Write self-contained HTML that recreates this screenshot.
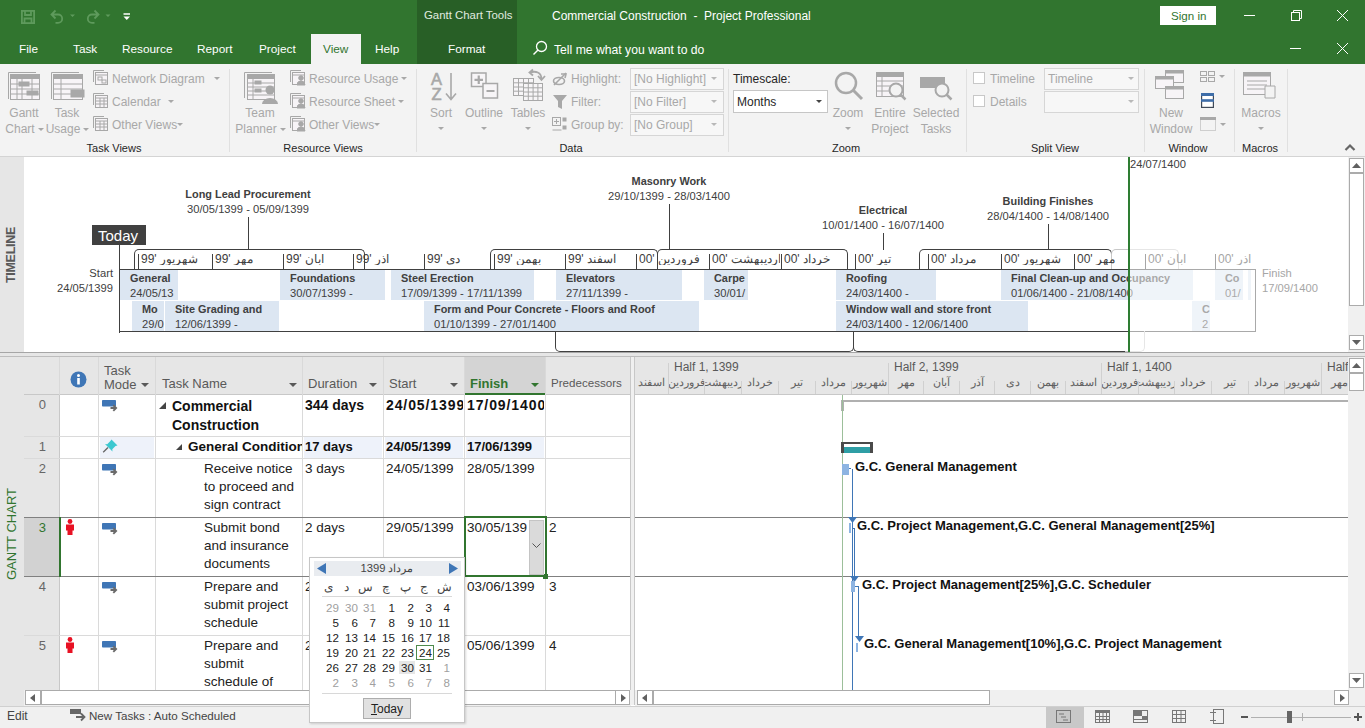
<!DOCTYPE html>
<html><head><meta charset="utf-8">
<style>
*{margin:0;padding:0;box-sizing:border-box}
html,body{width:1365px;height:728px;overflow:hidden;background:#fff;font-family:"Liberation Sans",sans-serif;color:#222}
.a{position:absolute;white-space:nowrap;line-height:1}
svg.a{overflow:visible}
</style></head><body>

<div class="a" style="left:0px;top:0px;width:1365px;height:64px;background:#31752F;"></div>
<div class="a" style="left:417px;top:0px;width:100px;height:64px;background:#285F26;"></div>
<svg class="a" style="left:0px;top:0px;" width="140" height="32" viewBox="0 0 140 32"><g fill="none" stroke="#5E9A5C" stroke-width="1.8">
  <rect x="21.9" y="10.9" width="12.2" height="12.2"/>
  <path d="M25 11v4h6v-4M24.5 23v-4.5h7V23"/>
  <path d="M51.5 14.5h6.5a4.2 4.2 0 0 1 0 8.4h-2.5M55.5 10.5l-4 4 4 4"/>
  <path d="M98.5 14.5h-6.5a4.2 4.2 0 0 0 0 8.4h2.5M94.5 10.5l4 4-4 4"/>
 </g>
 <path d="M70 14.5h5l-2.5 2.5z M105.5 14.5h5l-2.5 2.5z" fill="#5E9A5C"/></svg>
<svg class="a" style="left:123px;top:13px;" width="8" height="8" viewBox="0 0 8 8"><path d="M0.5 1h6.5" stroke="#fff" stroke-width="1.5"/><path d="M0.5 3.5h6.5l-3.25 3.5z" fill="#fff"/></svg>
<div class="a" style="left:424px;top:10px;font-size:11.4px;color:#E0ECE0;">Gantt Chart Tools</div>
<div class="a" style="left:552px;top:10px;font-size:12px;color:#fff;">Commercial Construction &nbsp;-&nbsp; Project Professional</div>
<div class="a" style="left:1160px;top:6px;width:56px;height:19px;background:#fff;"></div>
<div class="a" style="left:1171px;top:10px;font-size:11.6px;color:#31752F;">Sign in</div>
<svg class="a" style="left:1235px;top:6px;" width="125" height="58" viewBox="0 0 125 58"><g stroke="#fff" stroke-width="1" fill="none">
  <path d="M9 9.5h11"/>
  <rect x="56.5" y="6.5" width="8" height="8"/><path d="M58.5 6.5v-2h8v8h-2"/>
  <path d="M102 4l11 11M113 4l-11 11"/>
  <path d="M55 42.5h11"/>
  <path d="M102 37l11 11M113 37l-11 11"/>
 </g></svg>
<div class="a" style="left:311px;top:34px;width:50px;height:30px;background:#F3F3F3;"></div>
<div class="a" style="left:19px;top:44px;font-size:11.8px;color:#fff;">File</div>
<div class="a" style="left:73px;top:44px;font-size:11.8px;color:#fff;">Task</div>
<div class="a" style="left:122px;top:44px;font-size:11.8px;color:#fff;">Resource</div>
<div class="a" style="left:197px;top:44px;font-size:11.8px;color:#fff;">Report</div>
<div class="a" style="left:259px;top:44px;font-size:11.8px;color:#fff;">Project</div>
<div class="a" style="left:375px;top:44px;font-size:11.8px;color:#fff;">Help</div>
<div class="a" style="left:448px;top:44px;font-size:11.8px;color:#fff;">Format</div>
<div class="a" style="left:323px;top:44px;font-size:11.8px;color:#31752F;">View</div>
<svg class="a" style="left:532px;top:40px;" width="16" height="16" viewBox="0 0 16 16"><circle cx="9.5" cy="6.5" r="5" fill="none" stroke="#fff" stroke-width="1.3"/><path d="M6 10L1.5 14.5" stroke="#fff" stroke-width="1.5"/></svg>
<div class="a" style="left:554px;top:44px;font-size:12.2px;color:#fff;">Tell me what you want to do</div>
<div class="a" style="left:0px;top:64px;width:1365px;height:93px;background:#F3F3F3;border-bottom:1px solid #D4D4D4"></div>
<div class="a" style="left:229px;top:69px;width:1px;height:83px;background:#E0E0E0;"></div>
<div class="a" style="left:416px;top:69px;width:1px;height:83px;background:#E0E0E0;"></div>
<div class="a" style="left:728px;top:69px;width:1px;height:83px;background:#E0E0E0;"></div>
<div class="a" style="left:966px;top:69px;width:1px;height:83px;background:#E0E0E0;"></div>
<div class="a" style="left:1144px;top:69px;width:1px;height:83px;background:#E0E0E0;"></div>
<div class="a" style="left:1234px;top:69px;width:1px;height:83px;background:#E0E0E0;"></div>
<div class="a" style="left:1287px;top:69px;width:1px;height:83px;background:#E0E0E0;"></div>
<div class="a" style="left:14px;width:200px;text-align:center;top:143px;font-size:11px;color:#262626;">Task Views</div>
<div class="a" style="left:223px;width:200px;text-align:center;top:143px;font-size:11px;color:#262626;">Resource Views</div>
<div class="a" style="left:471px;width:200px;text-align:center;top:143px;font-size:11px;color:#262626;">Data</div>
<div class="a" style="left:746px;width:200px;text-align:center;top:143px;font-size:11px;color:#262626;">Zoom</div>
<div class="a" style="left:955px;width:200px;text-align:center;top:143px;font-size:11px;color:#262626;">Split View</div>
<div class="a" style="left:1088px;width:200px;text-align:center;top:143px;font-size:11px;color:#262626;">Window</div>
<div class="a" style="left:1160px;width:200px;text-align:center;top:143px;font-size:11px;color:#262626;">Macros</div>
<svg class="a" style="left:8px;top:72px;" width="34" height="30" viewBox="0 0 34 30"><g stroke="#A8A8A8" fill="none" stroke-width="1"><path d="M0.5 27V0.5H28"/><rect x="2.5" y="2.5" width="29" height="25" fill="#F7F4F7"/><rect x="2.5" y="2.5" width="29" height="4" fill="#A8A8A8"/><path d="M2.5 12h29M2.5 17h29M2.5 22h29M9 6v21M14 6v21M24 6v21"/><rect x="11" y="10" width="10" height="4" fill="#A8A8A8"/><rect x="19" y="19" width="11" height="4" fill="#A8A8A8"/></g></svg>
<svg class="a" style="left:51px;top:72px;" width="34" height="30" viewBox="0 0 34 30"><g stroke="#A8A8A8" fill="none" stroke-width="1"><path d="M0.5 27V0.5H28"/><rect x="2.5" y="2.5" width="29" height="25" fill="#F7F4F7"/><rect x="2.5" y="2.5" width="29" height="4" fill="#A8A8A8"/><path d="M2.5 12h29M2.5 17h29M2.5 22h29M10 6v21"/><rect x="20" y="18" width="13" height="7" fill="#A8A8A8"/></g></svg>
<div class="a" style="left:-76px;width:200px;text-align:center;top:107px;font-size:12px;color:#A8A8A8;">Gantt</div>
<div class="a" style="left:-80px;width:200px;text-align:center;top:123px;font-size:12px;color:#A8A8A8;">Chart</div>
<svg class="a" style="left:38px;top:128px;" width="7" height="4" viewBox="0 0 7 4"><path d="M0 0h6l-3 3z" fill="#A8A8A8"/></svg>
<div class="a" style="left:-33px;width:200px;text-align:center;top:107px;font-size:12px;color:#A8A8A8;">Task</div>
<div class="a" style="left:-37px;width:200px;text-align:center;top:123px;font-size:12px;color:#A8A8A8;">Usage</div>
<svg class="a" style="left:83px;top:128px;" width="7" height="4" viewBox="0 0 7 4"><path d="M0 0h6l-3 3z" fill="#A8A8A8"/></svg>
<svg class="a" style="left:93px;top:70px;" width="16" height="16" viewBox="0 0 16 16"><g stroke="#A8A8A8" fill="none"><path d="M0.5 12V0.5H11"/><rect x="2.5" y="2.5" width="12" height="12" fill="#F7F4F7"/><path d="M2.5 5h12"/><rect x="5" y="7" width="4" height="3"/><rect x="9" y="10" width="4" height="3"/></g></svg>
<div class="a" style="left:112px;top:73px;font-size:12px;color:#A8A8A8;">Network Diagram</div>
<svg class="a" style="left:214px;top:77px;" width="7" height="4" viewBox="0 0 7 4"><path d="M0 0h6l-3 3z" fill="#A8A8A8"/></svg>
<svg class="a" style="left:93px;top:93px;" width="16" height="16" viewBox="0 0 16 16"><g stroke="#A8A8A8" fill="none"><path d="M0.5 12V0.5H11"/><rect x="2.5" y="2.5" width="12" height="12" fill="#F7F4F7"/><path d="M2.5 5h12"/><path d="M2.5 8h12M2.5 11h12M7 5v10M11 5v10"/></g></svg>
<div class="a" style="left:112px;top:96px;font-size:12px;color:#A8A8A8;">Calendar</div>
<svg class="a" style="left:168px;top:100px;" width="7" height="4" viewBox="0 0 7 4"><path d="M0 0h6l-3 3z" fill="#A8A8A8"/></svg>
<svg class="a" style="left:93px;top:116px;" width="16" height="16" viewBox="0 0 16 16"><g stroke="#A8A8A8" fill="none"><path d="M0.5 12V0.5H11"/><rect x="2.5" y="2.5" width="12" height="12" fill="#F7F4F7"/><path d="M2.5 5h12"/><path d="M2.5 8h12M2.5 11h12M7 5v10M11 5v10"/></g></svg>
<div class="a" style="left:112px;top:119px;font-size:12px;color:#A8A8A8;">Other Views</div>
<svg class="a" style="left:177px;top:123px;" width="7" height="4" viewBox="0 0 7 4"><path d="M0 0h6l-3 3z" fill="#A8A8A8"/></svg>
<svg class="a" style="left:244px;top:72px;" width="34" height="32" viewBox="0 0 34 32"><g stroke="#A8A8A8" fill="none"><path d="M0.5 26V0.5H28"/><rect x="3.5" y="2.5" width="27" height="25" fill="#F7F4F7"/><rect x="3.5" y="2.5" width="27" height="4" fill="#A8A8A8"/>
<path d="M3.5 11h27M3.5 15h27M3.5 19h27M3.5 23h27M9 6v21"/>
<rect x="11" y="9" width="6" height="3" fill="#A8A8A8"/><rect x="11" y="17" width="6" height="3" fill="#A8A8A8"/></g>
<circle cx="26" cy="18" r="4.5" fill="#A8A8A8"/><path d="M18 32a8 6 0 0 1 16 0z" fill="#A8A8A8"/></svg>
<div class="a" style="left:160px;width:200px;text-align:center;top:107px;font-size:12px;color:#A8A8A8;">Team</div>
<div class="a" style="left:156px;width:200px;text-align:center;top:123px;font-size:12px;color:#A8A8A8;">Planner</div>
<svg class="a" style="left:280px;top:128px;" width="7" height="4" viewBox="0 0 7 4"><path d="M0 0h6l-3 3z" fill="#A8A8A8"/></svg>
<svg class="a" style="left:290px;top:70px;" width="16" height="16" viewBox="0 0 16 16"><g stroke="#A8A8A8" fill="none"><path d="M0.5 12V0.5H11"/><rect x="2.5" y="2.5" width="12" height="12" fill="#F7F4F7"/><path d="M2.5 5h12"/><circle cx="11" cy="8" r="2.3" fill="#A8A8A8"/><path d="M7 15a4 4 0 0 1 8 0z" fill="#A8A8A8"/></g></svg>
<div class="a" style="left:309px;top:73px;font-size:12px;color:#A8A8A8;">Resource Usage</div>
<svg class="a" style="left:401px;top:77px;" width="7" height="4" viewBox="0 0 7 4"><path d="M0 0h6l-3 3z" fill="#A8A8A8"/></svg>
<svg class="a" style="left:290px;top:93px;" width="16" height="16" viewBox="0 0 16 16"><g stroke="#A8A8A8" fill="none"><path d="M0.5 12V0.5H11"/><rect x="2.5" y="2.5" width="12" height="12" fill="#F7F4F7"/><path d="M2.5 5h12"/><circle cx="11" cy="8" r="2.3" fill="#A8A8A8"/><path d="M7 15a4 4 0 0 1 8 0z" fill="#A8A8A8"/></g></svg>
<div class="a" style="left:309px;top:96px;font-size:12px;color:#A8A8A8;">Resource Sheet</div>
<svg class="a" style="left:398px;top:100px;" width="7" height="4" viewBox="0 0 7 4"><path d="M0 0h6l-3 3z" fill="#A8A8A8"/></svg>
<svg class="a" style="left:290px;top:116px;" width="16" height="16" viewBox="0 0 16 16"><g stroke="#A8A8A8" fill="none"><path d="M0.5 12V0.5H11"/><rect x="2.5" y="2.5" width="12" height="12" fill="#F7F4F7"/><path d="M2.5 5h12"/><circle cx="11" cy="8" r="2.3" fill="#A8A8A8"/><path d="M7 15a4 4 0 0 1 8 0z" fill="#A8A8A8"/></g></svg>
<div class="a" style="left:309px;top:119px;font-size:12px;color:#A8A8A8;">Other Views</div>
<svg class="a" style="left:374px;top:123px;" width="7" height="4" viewBox="0 0 7 4"><path d="M0 0h6l-3 3z" fill="#A8A8A8"/></svg>
<svg class="a" style="left:430px;top:70px;" width="30" height="32" viewBox="0 0 30 32"><text x="1" y="14.5" font-size="16.5" font-family="Liberation Sans" fill="#A8A8A8" stroke="#A8A8A8" stroke-width="0.6">A</text><text x="1.5" y="29.7" font-size="16.5" font-family="Liberation Sans" fill="#A8A8A8" stroke="#A8A8A8" stroke-width="0.6">Z</text>
<path d="M21 3v26M16 23.5l5 6 5-6" stroke="#A8A8A8" fill="none" stroke-width="1.6"/></svg>
<div class="a" style="left:341px;width:200px;text-align:center;top:107px;font-size:12px;color:#A8A8A8;">Sort</div>
<svg class="a" style="left:438px;top:127px;" width="7" height="4" viewBox="0 0 7 4"><path d="M0 0h6l-3 3z" fill="#A8A8A8"/></svg>
<svg class="a" style="left:470px;top:70px;" width="32" height="32" viewBox="0 0 32 32"><g stroke="#A8A8A8" fill="#F7F5F7" stroke-width="1.5"><rect x="1.5" y="3" width="14.5" height="13.5"/><rect x="13" y="13.5" width="14.5" height="14.5"/></g><path d="M4.5 9.8h8.5M8.75 5.5v8.5M16.5 21h8" stroke="#A8A8A8" stroke-width="2.2"/></svg>
<div class="a" style="left:384px;width:200px;text-align:center;top:107px;font-size:12px;color:#A8A8A8;">Outline</div>
<svg class="a" style="left:481px;top:127px;" width="7" height="4" viewBox="0 0 7 4"><path d="M0 0h6l-3 3z" fill="#A8A8A8"/></svg>
<svg class="a" style="left:512px;top:68px;" width="34" height="36" viewBox="0 0 34 36"><g stroke="#A8A8A8" fill="#F7F5F7"><rect x="1.5" y="10.5" width="20" height="17"/><path d="M1.5 14.8h20M1.5 19h20M1.5 23.2h20M6.5 10.5v17M11.5 10.5v17M16.5 10.5v17"/>
<rect x="11.5" y="15.5" width="19" height="17"/><path d="M11.5 19.8h19M11.5 24h19M11.5 28.2h19M16.3 15.5v17M21.1 15.5v17M25.9 15.5v17"/></g>
<path d="M18 4.5c6-2 11 0 11.5 6M26 8l3.5 4 3.5-4M21 1.5l-3.5 3 3.5 3" stroke="#A8A8A8" stroke-width="1.8" fill="none"/></svg>
<div class="a" style="left:428px;width:200px;text-align:center;top:107px;font-size:12px;color:#A8A8A8;">Tables</div>
<svg class="a" style="left:525px;top:127px;" width="7" height="4" viewBox="0 0 7 4"><path d="M0 0h6l-3 3z" fill="#A8A8A8"/></svg>
<svg class="a" style="left:552px;top:71px;" width="16" height="16" viewBox="0 0 16 16"><g stroke="#A8A8A8" fill="none" stroke-width="1.6"><ellipse cx="7" cy="10" rx="5.5" ry="3.5"/><path d="M2 14L14 2"/><path d="M9 3l5 0-1 4"/></g></svg>
<div class="a" style="left:571px;top:73px;font-size:12px;color:#A8A8A8;">Highlight:</div>
<svg class="a" style="left:552px;top:94px;" width="16" height="16" viewBox="0 0 16 16"><path d="M1 1h14l-5 6v8l-4-2V7z" fill="#A8A8A8"/></svg>
<div class="a" style="left:571px;top:96px;font-size:12px;color:#A8A8A8;">Filter:</div>
<svg class="a" style="left:552px;top:117px;" width="18" height="16" viewBox="0 0 18 16"><g stroke="#A8A8A8" fill="none"><rect x="0.5" y="0.5" width="8" height="8"/><path d="M2 4.5h5M4.5 2v5M0.5 13h9"/><rect x="11" y="1" width="3" height="3" fill="#A8A8A8"/><rect x="11" y="9" width="3" height="3" fill="#A8A8A8"/></g></svg>
<div class="a" style="left:571px;top:119px;font-size:12px;color:#A8A8A8;">Group by:</div>
<div class="a" style="left:630px;top:68px;width:94px;height:22px;background:#F7F7F7;border:1px solid #D6D6D6"></div>
<div class="a" style="left:634px;top:73px;font-size:12px;color:#A8A8A8;">[No Highlight]</div>
<svg class="a" style="left:711px;top:77px;" width="7" height="4" viewBox="0 0 7 4"><path d="M0 0h6l-3 3z" fill="#B8B8B8"/></svg>
<div class="a" style="left:630px;top:91px;width:94px;height:22px;background:#F7F7F7;border:1px solid #D6D6D6"></div>
<div class="a" style="left:634px;top:96px;font-size:12px;color:#A8A8A8;">[No Filter]</div>
<svg class="a" style="left:711px;top:100px;" width="7" height="4" viewBox="0 0 7 4"><path d="M0 0h6l-3 3z" fill="#B8B8B8"/></svg>
<div class="a" style="left:630px;top:114px;width:94px;height:22px;background:#F7F7F7;border:1px solid #D6D6D6"></div>
<div class="a" style="left:634px;top:119px;font-size:12px;color:#A8A8A8;">[No Group]</div>
<svg class="a" style="left:711px;top:123px;" width="7" height="4" viewBox="0 0 7 4"><path d="M0 0h6l-3 3z" fill="#B8B8B8"/></svg>
<div class="a" style="left:733px;top:73px;font-size:12px;color:#262626;">Timescale:</div>
<div class="a" style="left:733px;top:90px;width:95px;height:23px;background:#fff;border:1px solid #C6C6C6"></div>
<div class="a" style="left:737px;top:96px;font-size:12px;color:#262626;">Months</div>
<svg class="a" style="left:816px;top:100px;" width="7" height="4" viewBox="0 0 7 4"><path d="M0 0h6l-3 3z" fill="#444"/></svg>
<svg class="a" style="left:834px;top:72px;" width="30" height="30" viewBox="0 0 30 30"><circle cx="12" cy="11" r="10" fill="none" stroke="#A8A8A8" stroke-width="2.5"/><path d="M19 18l9 9" stroke="#A8A8A8" stroke-width="3"/></svg>
<div class="a" style="left:748px;width:200px;text-align:center;top:107px;font-size:12px;color:#A8A8A8;">Zoom</div>
<svg class="a" style="left:845px;top:127px;" width="7" height="4" viewBox="0 0 7 4"><path d="M0 0h6l-3 3z" fill="#A8A8A8"/></svg>
<svg class="a" style="left:876px;top:72px;" width="32" height="30" viewBox="0 0 32 30"><g stroke="#A8A8A8" fill="none"><rect x="0.5" y="0.5" width="27" height="24" fill="#F7F4F7"/><rect x="0.5" y="0.5" width="27" height="4" fill="#A8A8A8"/><path d="M0.5 9h27M0.5 14h27M0.5 19h27M6 4v21"/></g>
<circle cx="20" cy="18" r="6.5" fill="#F3F3F3" stroke="#A8A8A8" stroke-width="2"/><path d="M24.5 22.5l5 5" stroke="#A8A8A8" stroke-width="2.5"/></svg>
<div class="a" style="left:790px;width:200px;text-align:center;top:107px;font-size:12px;color:#A8A8A8;">Entire</div>
<div class="a" style="left:790px;width:200px;text-align:center;top:123px;font-size:12px;color:#A8A8A8;">Project</div>
<svg class="a" style="left:920px;top:74px;" width="34" height="30" viewBox="0 0 34 30"><rect x="0" y="3" width="25" height="11" fill="#A8A8A8"/>
<circle cx="22" cy="16" r="6.5" fill="#F3F3F3" stroke="#A8A8A8" stroke-width="2"/><path d="M26.5 20.5l5 5" stroke="#A8A8A8" stroke-width="2.5"/></svg>
<div class="a" style="left:836px;width:200px;text-align:center;top:107px;font-size:12px;color:#A8A8A8;">Selected</div>
<div class="a" style="left:836px;width:200px;text-align:center;top:123px;font-size:12px;color:#A8A8A8;">Tasks</div>
<div class="a" style="left:973px;top:72px;width:12px;height:12px;background:#fff;border:1px solid #C8C8C8"></div>
<div class="a" style="left:973px;top:95px;width:12px;height:12px;background:#fff;border:1px solid #C8C8C8"></div>
<div class="a" style="left:990px;top:73px;font-size:12px;color:#A8A8A8;">Timeline</div>
<div class="a" style="left:990px;top:96px;font-size:12px;color:#A8A8A8;">Details</div>
<div class="a" style="left:1044px;top:68px;width:95px;height:22px;background:#F7F7F7;border:1px solid #D6D6D6"></div>
<div class="a" style="left:1048px;top:73px;font-size:12px;color:#A8A8A8;">Timeline</div>
<svg class="a" style="left:1128px;top:77px;" width="7" height="4" viewBox="0 0 7 4"><path d="M0 0h6l-3 3z" fill="#B8B8B8"/></svg>
<div class="a" style="left:1044px;top:91px;width:95px;height:22px;background:#F7F7F7;border:1px solid #D6D6D6"></div>
<svg class="a" style="left:1128px;top:100px;" width="7" height="4" viewBox="0 0 7 4"><path d="M0 0h6l-3 3z" fill="#B8B8B8"/></svg>
<svg class="a" style="left:1155px;top:70px;" width="32" height="32" viewBox="0 0 32 32"><g stroke="#A8A8A8" fill="#F7F4F7"><rect x="10.5" y="0.5" width="18" height="12"/><rect x="0.5" y="6.5" width="18" height="12"/><rect x="10.5" y="16.5" width="18" height="12"/></g>
<rect x="10.5" y="0.5" width="18" height="3" fill="#A8A8A8"/><rect x="0.5" y="6.5" width="18" height="3" fill="#A8A8A8"/><rect x="10.5" y="16.5" width="18" height="3" fill="#A8A8A8"/></svg>
<div class="a" style="left:1071px;width:200px;text-align:center;top:107px;font-size:12px;color:#A8A8A8;">New</div>
<div class="a" style="left:1071px;width:200px;text-align:center;top:123px;font-size:12px;color:#A8A8A8;">Window</div>
<svg class="a" style="left:1200px;top:71px;" width="30" height="12" viewBox="0 0 30 12"><g stroke="#A8A8A8" fill="none"><rect x="0.5" y="0.5" width="6" height="4"/><rect x="0.5" y="6.5" width="6" height="4"/><rect x="8.5" y="0.5" width="6" height="4"/><rect x="8.5" y="6.5" width="6" height="4"/></g><path d="M19 4h6l-3 3z" fill="#A8A8A8"/></svg>
<svg class="a" style="left:1201px;top:93px;" width="13" height="15" viewBox="0 0 13 15"><rect x="0.6" y="0.6" width="11.8" height="13.8" fill="#fff" stroke="#404A58" stroke-width="1.2"/><rect x="0" y="0" width="13" height="3" fill="#3E6DA8"/><rect x="0" y="6.2" width="13" height="2.6" fill="#3E6DA8"/></svg>
<svg class="a" style="left:1200px;top:117px;" width="30" height="15" viewBox="0 0 30 15"><rect x="0.5" y="0.5" width="15" height="13" fill="none" stroke="#A8A8A8" stroke-dasharray="1 1"/><rect x="0" y="0" width="16" height="3" fill="#A8A8A8"/><path d="M20 6h6l-3 3z" fill="#A8A8A8"/></svg>
<svg class="a" style="left:1243px;top:72px;" width="36" height="30" viewBox="0 0 36 30"><g stroke="#A8A8A8" fill="#F7F4F7"><rect x="0.5" y="0.5" width="27" height="22"/></g><rect x="0.5" y="0.5" width="27" height="4" fill="#A8A8A8"/>
<path d="M4 9h20M4 13h20M4 17h20" stroke="#A8A8A8"/><path d="M22 14h10v12h-10z" fill="#F3F3F3" stroke="#A8A8A8"/></svg>
<div class="a" style="left:1161px;width:200px;text-align:center;top:107px;font-size:12px;color:#A8A8A8;">Macros</div>
<svg class="a" style="left:1258px;top:127px;" width="7" height="4" viewBox="0 0 7 4"><path d="M0 0h6l-3 3z" fill="#A8A8A8"/></svg>
<svg class="a" style="left:1344px;top:143px;" width="12" height="8" viewBox="0 0 12 8"><path d="M1.5 7l4.5-4.5 4.5 4.5" stroke="#666" fill="none" stroke-width="2.2"/></svg>
<!--TIMELINE-->
<div class="a" style="left:0px;top:157px;width:24px;height:195px;background:#E6E6E6;"></div>
<div class="a" style="left:5px;top:283px;transform:rotate(-90deg);transform-origin:0 0;font-size:12.5px;font-weight:bold;color:#595959;letter-spacing:-0.3px">TIMELINE</div>
<div class="a" style="left:148px;width:200px;text-align:center;top:189px;font-size:10.9px;color:#404040;font-weight:bold;">Long Lead Procurement</div>
<div class="a" style="left:148px;width:200px;text-align:center;top:204px;font-size:11.2px;color:#404040;">30/05/1399 - 05/09/1399</div>
<div class="a" style="left:248px;top:217px;width:1px;height:33px;background:#404040;"></div>
<div class="a" style="left:569px;width:200px;text-align:center;top:176px;font-size:10.9px;color:#404040;font-weight:bold;">Masonry Work</div>
<div class="a" style="left:569px;width:200px;text-align:center;top:191px;font-size:11.2px;color:#404040;">29/10/1399 - 28/03/1400</div>
<div class="a" style="left:669px;top:204px;width:1px;height:46px;background:#404040;"></div>
<div class="a" style="left:783px;width:200px;text-align:center;top:205px;font-size:10.9px;color:#404040;font-weight:bold;">Electrical</div>
<div class="a" style="left:783px;width:200px;text-align:center;top:220px;font-size:11.2px;color:#404040;">10/01/1400 - 16/07/1400</div>
<div class="a" style="left:883px;top:233px;width:1px;height:17px;background:#404040;"></div>
<div class="a" style="left:948px;width:200px;text-align:center;top:196px;font-size:10.9px;color:#404040;font-weight:bold;">Building Finishes</div>
<div class="a" style="left:948px;width:200px;text-align:center;top:211px;font-size:11.2px;color:#404040;">28/04/1400 - 14/08/1400</div>
<div class="a" style="left:1048px;top:224px;width:1px;height:26px;background:#404040;"></div>
<div class="a" style="left:92px;top:225px;width:54px;height:20px;background:#404040;"></div>
<div class="a" style="left:98px;top:228px;font-size:15px;color:#fff;">Today</div>
<div class="a" style="left:119px;top:245px;width:1px;height:88px;background:#404040;"></div>
<div class="a" style="left:134px;top:249px;width:231px;height:21px;border:1px solid #404040;border-bottom:none;border-radius:5px 5px 0 0"></div>
<div class="a" style="left:490px;top:249px;width:168px;height:21px;border:1px solid #404040;border-bottom:none;border-radius:5px 5px 0 0"></div>
<div class="a" style="left:657px;top:249px;width:191px;height:21px;border:1px solid #404040;border-bottom:none;border-radius:5px 5px 0 0"></div>
<div class="a" style="left:919px;top:249px;width:193px;height:21px;border:1px solid #404040;border-bottom:none;border-radius:5px 5px 0 0"></div>
<div class="a" style="left:1111px;top:249px;width:68px;height:21px;border:1px solid #C8C8C8;border-bottom:none;border-radius:5px 5px 0 0"></div>
<div class="a" style="left:138px;top:254px;width:1px;height:15px;background:#404040;"></div>
<div class="a" style="left:141px;top:253px;width:69px;overflow:hidden;font-size:12px;color:#404040">99' شهریور</div>
<div class="a" style="left:212px;top:254px;width:1px;height:15px;background:#404040;"></div>
<div class="a" style="left:215px;top:253px;width:66px;overflow:hidden;font-size:12px;color:#404040">99' مهر</div>
<div class="a" style="left:283px;top:254px;width:1px;height:15px;background:#404040;"></div>
<div class="a" style="left:286px;top:253px;width:66px;overflow:hidden;font-size:12px;color:#404040">99' آبان</div>
<div class="a" style="left:353px;top:254px;width:1px;height:15px;background:#404040;"></div>
<div class="a" style="left:356px;top:253px;width:67px;overflow:hidden;font-size:12px;color:#404040">99' آذر</div>
<div class="a" style="left:424px;top:254px;width:1px;height:15px;background:#404040;"></div>
<div class="a" style="left:427px;top:253px;width:66px;overflow:hidden;font-size:12px;color:#404040">99' دی</div>
<div class="a" style="left:494px;top:254px;width:1px;height:15px;background:#404040;"></div>
<div class="a" style="left:497px;top:253px;width:66px;overflow:hidden;font-size:12px;color:#404040">99' بهمن</div>
<div class="a" style="left:565px;top:254px;width:1px;height:15px;background:#404040;"></div>
<div class="a" style="left:568px;top:253px;width:66px;overflow:hidden;font-size:12px;color:#404040">99' اسفند</div>
<div class="a" style="left:636px;top:254px;width:1px;height:15px;background:#404040;"></div>
<div class="a" style="left:639px;top:253px;width:68px;overflow:hidden;font-size:12px;color:#404040">00' فروردین</div>
<div class="a" style="left:709px;top:254px;width:1px;height:15px;background:#404040;"></div>
<div class="a" style="left:712px;top:253px;width:68px;overflow:hidden;font-size:12px;color:#404040">00' اردیبهشت</div>
<div class="a" style="left:781px;top:254px;width:1px;height:15px;background:#404040;"></div>
<div class="a" style="left:784px;top:253px;width:69px;overflow:hidden;font-size:12px;color:#404040">00' خرداد</div>
<div class="a" style="left:855px;top:254px;width:1px;height:15px;background:#404040;"></div>
<div class="a" style="left:858px;top:253px;width:68px;overflow:hidden;font-size:12px;color:#404040">00' تیر</div>
<div class="a" style="left:928px;top:254px;width:1px;height:15px;background:#404040;"></div>
<div class="a" style="left:931px;top:253px;width:68px;overflow:hidden;font-size:12px;color:#404040">00' مرداد</div>
<div class="a" style="left:1001px;top:254px;width:1px;height:15px;background:#404040;"></div>
<div class="a" style="left:1004px;top:253px;width:68px;overflow:hidden;font-size:12px;color:#404040">00' شهریور</div>
<div class="a" style="left:1074px;top:254px;width:1px;height:15px;background:#404040;"></div>
<div class="a" style="left:1077px;top:253px;width:67px;overflow:hidden;font-size:12px;color:#404040">00' مهر</div>
<div class="a" style="left:119px;top:269px;width:1137px;height:63px;border:1px solid #404040;border-left:1px solid #404040"></div>
<div class="a" style="left:120px;top:270px;width:58px;height:30px;background:#DCE6F2;overflow:hidden"><div class="a" style="left:10px;top:3px;font-size:10.9px;font-weight:bold;color:#404040">General</div><div class="a" style="left:10px;top:18px;font-size:11.2px;color:#404040">24/05/13</div></div>
<div class="a" style="left:280px;top:270px;width:105px;height:30px;background:#DCE6F2;overflow:hidden"><div class="a" style="left:10px;top:3px;font-size:10.9px;font-weight:bold;color:#404040">Foundations</div><div class="a" style="left:10px;top:18px;font-size:11.2px;color:#404040">30/07/1399 -</div></div>
<div class="a" style="left:391px;top:270px;width:143px;height:30px;background:#DCE6F2;overflow:hidden"><div class="a" style="left:10px;top:3px;font-size:10.9px;font-weight:bold;color:#404040">Steel Erection</div><div class="a" style="left:10px;top:18px;font-size:11.2px;color:#404040">17/09/1399 - 17/11/1399</div></div>
<div class="a" style="left:556px;top:270px;width:126px;height:30px;background:#DCE6F2;overflow:hidden"><div class="a" style="left:10px;top:3px;font-size:10.9px;font-weight:bold;color:#404040">Elevators</div><div class="a" style="left:10px;top:18px;font-size:11.2px;color:#404040">27/11/1399 -</div></div>
<div class="a" style="left:704px;top:270px;width:44px;height:30px;background:#DCE6F2;overflow:hidden"><div class="a" style="left:10px;top:3px;font-size:10.9px;font-weight:bold;color:#404040">Carpe</div><div class="a" style="left:10px;top:18px;font-size:11.2px;color:#404040">30/01/</div></div>
<div class="a" style="left:836px;top:270px;width:100px;height:30px;background:#DCE6F2;overflow:hidden"><div class="a" style="left:10px;top:3px;font-size:10.9px;font-weight:bold;color:#404040">Roofing</div><div class="a" style="left:10px;top:18px;font-size:11.2px;color:#404040">24/03/1400 -</div></div>
<div class="a" style="left:1001px;top:270px;width:192px;height:30px;background:#DCE6F2;overflow:hidden"><div class="a" style="left:10px;top:3px;font-size:10.9px;font-weight:bold;color:#404040">Final Clean-up and Occupancy</div><div class="a" style="left:10px;top:18px;font-size:11.2px;color:#404040">01/06/1400 - 21/08/1400</div></div>
<div class="a" style="left:1215px;top:270px;width:28px;height:30px;background:#DCE6F2;overflow:hidden"><div class="a" style="left:10px;top:3px;font-size:10.9px;font-weight:bold;color:#404040">Co</div><div class="a" style="left:10px;top:18px;font-size:11.2px;color:#404040">01/</div></div>
<div class="a" style="left:1248px;top:270px;width:3px;height:30px;background:#DCE6F2;overflow:hidden"><div class="a" style="left:10px;top:3px;font-size:10.9px;font-weight:bold;color:#404040"></div><div class="a" style="left:10px;top:18px;font-size:11.2px;color:#404040"></div></div>
<div class="a" style="left:132px;top:301px;width:32px;height:30px;background:#DCE6F2;overflow:hidden"><div class="a" style="left:10px;top:3px;font-size:10.9px;font-weight:bold;color:#404040">Mo</div><div class="a" style="left:10px;top:18px;font-size:11.2px;color:#404040">29/05/1399</div></div>
<div class="a" style="left:165px;top:301px;width:114px;height:30px;background:#DCE6F2;overflow:hidden"><div class="a" style="left:10px;top:3px;font-size:10.9px;font-weight:bold;color:#404040">Site Grading and</div><div class="a" style="left:10px;top:18px;font-size:11.2px;color:#404040">12/06/1399 -</div></div>
<div class="a" style="left:424px;top:301px;width:275px;height:30px;background:#DCE6F2;overflow:hidden"><div class="a" style="left:10px;top:3px;font-size:10.9px;font-weight:bold;color:#404040">Form and Pour Concrete - Floors and Roof</div><div class="a" style="left:10px;top:18px;font-size:11.2px;color:#404040">01/10/1399 - 27/01/1400</div></div>
<div class="a" style="left:836px;top:301px;width:192px;height:30px;background:#DCE6F2;overflow:hidden"><div class="a" style="left:10px;top:3px;font-size:10.9px;font-weight:bold;color:#404040">Window wall and store front</div><div class="a" style="left:10px;top:18px;font-size:11.2px;color:#404040">24/03/1400 - 12/06/1400</div></div>
<div class="a" style="left:1192px;top:301px;width:18px;height:30px;background:#DCE6F2;overflow:hidden"><div class="a" style="left:10px;top:3px;font-size:10.9px;font-weight:bold;color:#404040">C</div><div class="a" style="left:10px;top:18px;font-size:11.2px;color:#404040">2</div></div>
<div class="a" style="left:40px;width:73px;text-align:right;top:268px;font-size:11.2px;color:#404040">Start</div>
<div class="a" style="left:40px;width:73px;text-align:right;top:283px;font-size:11.2px;color:#404040">24/05/1399</div>
<div class="a" style="left:555px;top:331px;width:299px;height:21px;border:1px solid #404040;border-top:none;border-radius:0 0 5px 5px"></div>
<div class="a" style="left:853px;top:331px;width:277px;height:21px;border:1px solid #404040;border-top:none;border-right:none;border-radius:0 0 0 5px"></div>
<div class="a" style="left:1125px;top:331px;width:20px;height:21px;border:1px solid #C8C8C8;border-top:none;border-left:none;border-radius:0 0 5px 0"></div>
<div class="a" style="left:1130px;top:157px;width:218px;height:195px;background:rgba(255,255,255,0.55);"></div>
<div class="a" style="left:1145px;top:254px;width:1px;height:15px;background:#A6A6A6;"></div>
<div class="a" style="left:1148px;top:253px;width:65px;overflow:hidden;font-size:12px;color:#A6A6A6">00' آبان</div>
<div class="a" style="left:1215px;top:254px;width:1px;height:15px;background:#A6A6A6;"></div>
<div class="a" style="left:1218px;top:253px;width:61px;overflow:hidden;font-size:12px;color:#A6A6A6">00' آذر</div>
<div class="a" style="left:1262px;top:268px;font-size:11.2px;color:#A6A6A6;">Finish</div>
<div class="a" style="left:1262px;top:283px;font-size:11.2px;color:#A6A6A6;">17/09/1400</div>
<div class="a" style="left:1128px;top:157px;width:2px;height:195px;background:#2E7D32;"></div>
<div class="a" style="left:1130px;top:159px;font-size:11.2px;color:#404040;">24/07/1400</div>
<div class="a" style="left:1348px;top:157px;width:17px;height:195px;background:#F0F0F0;"></div>
<div class="a" style="left:1349px;top:158px;width:15px;height:15px;background:#fff;border:1px solid #ABABAB"></div>
<svg class="a" style="left:1352px;top:163px;" width="9" height="5" viewBox="0 0 9 5"><path d="M0 5L4.5 0 9 5z" fill="#606060"/></svg>
<div class="a" style="left:1349px;top:173px;width:15px;height:133px;background:#fff;border:1px solid #ABABAB"></div>
<div class="a" style="left:1349px;top:335px;width:15px;height:15px;background:#fff;border:1px solid #ABABAB"></div>
<svg class="a" style="left:1352px;top:340px;" width="9" height="5" viewBox="0 0 9 5"><path d="M0 0L4.5 5 9 0z" fill="#606060"/></svg>
<div class="a" style="left:0px;top:352px;width:1365px;height:5px;background:#E6E6E6;border-top:1px solid #A6A6A6;border-bottom:1px solid #BDBDBD"></div>
<!--GANTT-->
<div class="a" style="left:0px;top:357px;width:60px;height:333px;background:#E6E6E6;"></div>
<div class="a" style="left:0px;top:690px;width:25px;height:16px;background:#E6E6E6;"></div>
<div class="a" style="left:5px;top:580px;transform:rotate(-90deg);transform-origin:0 0;font-size:13px;color:#31752F">GANTT CHART</div>
<div class="a" style="left:24px;top:357px;width:607px;height:38px;background:#E6E6E6;border-bottom:1px solid #C8C8C8"></div>
<div class="a" style="left:464px;top:357px;width:82px;height:38px;background:#D4D4D4;"></div>
<div class="a" style="left:464px;top:393px;width:82px;height:2px;background:#31752F;"></div>
<div class="a" style="left:59px;top:357px;width:1px;height:38px;background:#D9D9D9;"></div>
<div class="a" style="left:98px;top:357px;width:1px;height:38px;background:#D9D9D9;"></div>
<div class="a" style="left:155px;top:357px;width:1px;height:38px;background:#D9D9D9;"></div>
<div class="a" style="left:302px;top:357px;width:1px;height:38px;background:#D9D9D9;"></div>
<div class="a" style="left:383px;top:357px;width:1px;height:38px;background:#D9D9D9;"></div>
<div class="a" style="left:464px;top:357px;width:1px;height:38px;background:#D9D9D9;"></div>
<div class="a" style="left:545px;top:357px;width:1px;height:38px;background:#D9D9D9;"></div>
<div class="a" style="left:60px;top:395px;width:571px;height:295px;background:#fff;"></div>
<div class="a" style="left:59px;top:395px;width:1px;height:295px;background:#DADADA;"></div>
<div class="a" style="left:98px;top:395px;width:1px;height:295px;background:#DADADA;"></div>
<div class="a" style="left:155px;top:395px;width:1px;height:295px;background:#DADADA;"></div>
<div class="a" style="left:302px;top:395px;width:1px;height:295px;background:#DADADA;"></div>
<div class="a" style="left:383px;top:395px;width:1px;height:295px;background:#DADADA;"></div>
<div class="a" style="left:464px;top:395px;width:1px;height:295px;background:#DADADA;"></div>
<div class="a" style="left:545px;top:395px;width:1px;height:295px;background:#DADADA;"></div>
<div class="a" style="left:59px;top:395px;width:1px;height:295px;background:#C8C8C8;"></div>
<div class="a" style="left:24px;top:436px;width:607px;height:1px;background:#DADADA;"></div>
<div class="a" style="left:24px;top:458px;width:607px;height:1px;background:#DADADA;"></div>
<div class="a" style="left:24px;top:635px;width:607px;height:1px;background:#DADADA;"></div>
<div class="a" style="left:100px;top:437px;width:54px;height:21px;background:#EEF2FA;"></div>
<div class="a" style="left:304px;top:437px;width:78px;height:21px;background:#EEF2FA;"></div>
<div class="a" style="left:385px;top:437px;width:78px;height:21px;background:#EEF2FA;"></div>
<div class="a" style="left:466px;top:437px;width:78px;height:21px;background:#EEF2FA;"></div>
<div class="a" style="left:24px;top:517px;width:36px;height:60px;background:#D2D2D2;"></div>
<div class="a" style="left:24px;top:517px;width:607px;height:1px;background:#808080;"></div>
<div class="a" style="left:24px;top:576px;width:607px;height:1px;background:#808080;"></div>
<div class="a" style="left:59px;top:517px;width:2px;height:60px;background:#31752F;"></div>
<svg class="a" style="left:70px;top:371px" width="17" height="17" viewBox="0 0 17 17"><circle cx="8.5" cy="8.5" r="8" fill="#3F76B6"/><rect x="7.2" y="7" width="2.6" height="6.5" fill="#fff"/><circle cx="8.5" cy="4.6" r="1.5" fill="#fff"/></svg>
<div class="a" style="left:104px;top:364px;font-size:13px;color:#595959;">Task</div>
<div class="a" style="left:104px;top:378px;font-size:13px;color:#595959;">Mode</div>
<svg class="a" style="left:141px;top:383px;" width="9" height="5" viewBox="0 0 9 5"><path d="M0 0h8l-4 4z" fill="#595959"/></svg>
<div class="a" style="left:162px;top:377px;font-size:13px;color:#595959;">Task Name</div>
<svg class="a" style="left:289px;top:383px;" width="9" height="5" viewBox="0 0 9 5"><path d="M0 0h8l-4 4z" fill="#595959"/></svg>
<div class="a" style="left:308px;top:377px;font-size:13px;color:#595959;">Duration</div>
<svg class="a" style="left:369px;top:383px;" width="9" height="5" viewBox="0 0 9 5"><path d="M0 0h8l-4 4z" fill="#595959"/></svg>
<div class="a" style="left:389px;top:377px;font-size:13px;color:#595959;">Start</div>
<svg class="a" style="left:450px;top:383px;" width="9" height="5" viewBox="0 0 9 5"><path d="M0 0h8l-4 4z" fill="#595959"/></svg>
<div class="a" style="left:470px;top:377px;font-size:13px;color:#31752F;font-weight:bold;">Finish</div>
<svg class="a" style="left:531px;top:383px;" width="9" height="5" viewBox="0 0 9 5"><path d="M0 0h8l-4 4z" fill="#31752F"/></svg>
<div class="a" style="left:551px;top:377px;font-size:11.6px;color:#595959;">Predecessors</div>
<div class="a" style="left:24px;width:22px;text-align:right;top:398px;font-size:13px;color:#666">0</div>
<div class="a" style="left:24px;width:22px;text-align:right;top:440px;font-size:13px;color:#666">1</div>
<div class="a" style="left:24px;width:22px;text-align:right;top:462px;font-size:13px;color:#666">2</div>
<div class="a" style="left:24px;width:22px;text-align:right;top:521px;font-size:13px;color:#31752F">3</div>
<div class="a" style="left:24px;width:22px;text-align:right;top:580px;font-size:13px;color:#666">4</div>
<div class="a" style="left:24px;width:22px;text-align:right;top:639px;font-size:13px;color:#666">5</div>
<svg class="a" style="left:101px;top:400px;" width="18" height="12" viewBox="0 0 18 12"><rect x="1" y="0" width="14" height="6.5" rx="0.8" fill="#3F76B6"/><path d="M9.5 8h5.5M12.3 5.2l2.8 2.8-2.8 2.8" stroke="#6A6A6A" stroke-width="1.9" fill="none"/></svg>
<svg class="a" style="left:101px;top:464px;" width="18" height="12" viewBox="0 0 18 12"><rect x="1" y="0" width="14" height="6.5" rx="0.8" fill="#3F76B6"/><path d="M9.5 8h5.5M12.3 5.2l2.8 2.8-2.8 2.8" stroke="#6A6A6A" stroke-width="1.9" fill="none"/></svg>
<svg class="a" style="left:101px;top:523px;" width="18" height="12" viewBox="0 0 18 12"><rect x="1" y="0" width="14" height="6.5" rx="0.8" fill="#3F76B6"/><path d="M9.5 8h5.5M12.3 5.2l2.8 2.8-2.8 2.8" stroke="#6A6A6A" stroke-width="1.9" fill="none"/></svg>
<svg class="a" style="left:101px;top:582px;" width="18" height="12" viewBox="0 0 18 12"><rect x="1" y="0" width="14" height="6.5" rx="0.8" fill="#3F76B6"/><path d="M9.5 8h5.5M12.3 5.2l2.8 2.8-2.8 2.8" stroke="#6A6A6A" stroke-width="1.9" fill="none"/></svg>
<svg class="a" style="left:101px;top:641px;" width="18" height="12" viewBox="0 0 18 12"><rect x="1" y="0" width="14" height="6.5" rx="0.8" fill="#3F76B6"/><path d="M9.5 8h5.5M12.3 5.2l2.8 2.8-2.8 2.8" stroke="#6A6A6A" stroke-width="1.9" fill="none"/></svg>
<svg class="a" style="left:101px;top:438px;" width="18" height="16" viewBox="0 0 18 16"><path d="M10.5 1.5l6 6-2 0.6-3.2 3.2 0.2 2.2-7.5-7.5 2.2 0.2 3.2-3.2z" fill="#3CC8D0"/><path d="M7 9.5L2.2 14.3" stroke="#666" stroke-width="1.3"/></svg>
<svg class="a" style="left:65px;top:519px;" width="10" height="17" viewBox="0 0 10 17"><circle cx="5" cy="2.5" r="2.4" fill="#E81123"/><path d="M1 5.5h8v6H7.5V16h-5v-4.5H1z" fill="#E81123"/></svg>
<svg class="a" style="left:65px;top:637px;" width="10" height="17" viewBox="0 0 10 17"><circle cx="5" cy="2.5" r="2.4" fill="#E81123"/><path d="M1 5.5h8v6H7.5V16h-5v-4.5H1z" fill="#E81123"/></svg>
<svg class="a" style="left:159px;top:402px;" width="7" height="7" viewBox="0 0 7 7"><path d="M7 0v7H0z" fill="#444"/></svg>
<div class="a" style="left:172px;top:399px;font-size:14px;color:#111;font-weight:bold;">Commercial</div>
<div class="a" style="left:172px;top:418px;font-size:14px;color:#111;font-weight:bold;">Construction</div>
<svg class="a" style="left:176px;top:444px;" width="6" height="6" viewBox="0 0 6 6"><path d="M6 0v6H0z" fill="#444"/></svg>
<div class="a" style="left:188px;top:440px;width:114px;overflow:hidden;font-size:13.5px;font-weight:bold;color:#111">General Conditions</div>
<div class="a" style="left:204px;top:462px;font-size:13.5px;color:#222;">Receive notice</div>
<div class="a" style="left:204px;top:480px;font-size:13.5px;color:#222;">to proceed and</div>
<div class="a" style="left:204px;top:498px;font-size:13.5px;color:#222;">sign contract</div>
<div class="a" style="left:204px;top:521px;font-size:13.5px;color:#222;">Submit bond</div>
<div class="a" style="left:204px;top:539px;font-size:13.5px;color:#222;">and insurance</div>
<div class="a" style="left:204px;top:557px;font-size:13.5px;color:#222;">documents</div>
<div class="a" style="left:204px;top:580px;font-size:13.5px;color:#222;">Prepare and</div>
<div class="a" style="left:204px;top:598px;font-size:13.5px;color:#222;">submit project</div>
<div class="a" style="left:204px;top:616px;font-size:13.5px;color:#222;">schedule</div>
<div class="a" style="left:204px;top:639px;font-size:13.5px;color:#222;">Prepare and</div>
<div class="a" style="left:204px;top:657px;font-size:13.5px;color:#222;">submit</div>
<div class="a" style="left:204px;top:675px;font-size:13.5px;color:#222;">schedule of</div>
<div class="a" style="left:305px;top:398px;width:78px;overflow:hidden;font-size:14px;font-weight:bold;color:#111">344 days</div>
<div class="a" style="left:386px;top:398px;width:77px;overflow:hidden;font-size:14px;font-weight:bold;color:#111;letter-spacing:0.9px">24/05/1399</div>
<div class="a" style="left:467px;top:398px;width:77px;overflow:hidden;font-size:14px;font-weight:bold;color:#111;letter-spacing:0.9px">17/09/1400</div>
<div class="a" style="left:305px;top:440px;width:78px;overflow:hidden;font-size:13px;font-weight:bold;color:#111">17 days</div>
<div class="a" style="left:386px;top:440px;width:77px;overflow:hidden;font-size:13px;font-weight:bold;color:#111">24/05/1399</div>
<div class="a" style="left:467px;top:440px;width:77px;overflow:hidden;font-size:13px;font-weight:bold;color:#111">17/06/1399</div>
<div class="a" style="left:305px;top:462px;width:78px;overflow:hidden;font-size:13.5px;color:#222">3 days</div>
<div class="a" style="left:386px;top:462px;width:77px;overflow:hidden;font-size:13.5px;color:#222">24/05/1399</div>
<div class="a" style="left:467px;top:462px;width:77px;overflow:hidden;font-size:13.5px;color:#222">28/05/1399</div>
<div class="a" style="left:305px;top:521px;width:78px;overflow:hidden;font-size:13.5px;color:#222">2 days</div>
<div class="a" style="left:386px;top:521px;width:77px;overflow:hidden;font-size:13.5px;color:#222">29/05/1399</div>
<div class="a" style="left:467px;top:521px;width:61px;overflow:hidden;font-size:13.5px;color:#222">30/05/139</div>
<div class="a" style="left:549px;top:521px;width:60px;overflow:hidden;font-size:13.5px;color:#222">2</div>
<div class="a" style="left:305px;top:580px;width:78px;overflow:hidden;font-size:13.5px;color:#222">2 days</div>
<div class="a" style="left:467px;top:580px;width:77px;overflow:hidden;font-size:13.5px;color:#222">03/06/1399</div>
<div class="a" style="left:549px;top:580px;width:60px;overflow:hidden;font-size:13.5px;color:#222">3</div>
<div class="a" style="left:305px;top:639px;width:78px;overflow:hidden;font-size:13.5px;color:#222">2 days</div>
<div class="a" style="left:467px;top:639px;width:77px;overflow:hidden;font-size:13.5px;color:#222">05/06/1399</div>
<div class="a" style="left:549px;top:639px;width:60px;overflow:hidden;font-size:13.5px;color:#222">4</div>
<div class="a" style="left:464px;top:516px;width:83px;height:61px;border:2px solid #31752F"></div>
<div class="a" style="left:543px;top:574px;width:5px;height:5px;background:#31752F;"></div>
<div class="a" style="left:529px;top:520px;width:15px;height:55px;background:#DADADA;border:1px solid #C4C4C4"></div>
<svg class="a" style="left:532px;top:543px;" width="9" height="6" viewBox="0 0 9 6"><path d="M0.5 0.5l4 4 4-4" stroke="#555" fill="none"/></svg>
<div class="a" style="left:630px;top:357px;width:5px;height:348px;background:#F0F0F0;border-left:1px solid #C8C8C8;border-right:1px solid #C8C8C8"></div>
<div class="a" style="left:24px;top:690px;width:607px;height:16px;background:#F0F0F0;"></div>
<div class="a" style="left:25px;top:690px;width:16px;height:15px;background:#fff;border:1px solid #ABABAB"></div>
<svg class="a" style="left:30px;top:694px;" width="5" height="8" viewBox="0 0 5 8"><path d="M5 0v8L0 4z" fill="#606060"/></svg>
<div class="a" style="left:41px;top:690px;width:576px;height:15px;background:#fff;border:1px solid #ABABAB"></div>
<div class="a" style="left:615px;top:690px;width:15px;height:15px;background:#fff;border:1px solid #ABABAB"></div>
<svg class="a" style="left:621px;top:694px;" width="5" height="8" viewBox="0 0 5 8"><path d="M0 0v8l5-4z" fill="#606060"/></svg>
<div class="a" style="left:635px;top:357px;width:713px;height:38px;background:#E6E6E6;border-bottom:1px solid #C8C8C8"></div>
<div class="a" style="left:635px;top:357px;width:713px;height:38px;overflow:hidden">
<div class="a" style="left:-1.1px;top:18px;width:34.3px;height:18px;overflow:hidden"><div class="a" style="left:-20px;top:2px;width:74.3px;direction:rtl;text-align:center;font-size:11.3px;color:#606060">اسفند</div></div>
<div class="a" style="left:33.2px;top:18px;width:36.7px;height:18px;overflow:hidden"><div class="a" style="left:-20px;top:2px;width:76.7px;direction:rtl;text-align:center;font-size:11.3px;color:#606060">فروردین</div></div>
<div class="a" style="left:33px;top:6px;width:1px;height:31px;background:#D0D0D0"></div>
<div class="a" style="left:69.9px;top:18px;width:36.7px;height:18px;overflow:hidden"><div class="a" style="left:-20px;top:2px;width:76.7px;direction:rtl;text-align:center;font-size:11.3px;color:#606060">اردیبهشت</div></div>
<div class="a" style="left:69px;top:24px;width:1px;height:13px;background:#D0D0D0"></div>
<div class="a" style="left:106.6px;top:18px;width:36.7px;height:18px;overflow:hidden"><div class="a" style="left:-20px;top:2px;width:76.7px;direction:rtl;text-align:center;font-size:11.3px;color:#606060">خرداد</div></div>
<div class="a" style="left:106px;top:24px;width:1px;height:13px;background:#D0D0D0"></div>
<div class="a" style="left:143.3px;top:18px;width:36.7px;height:18px;overflow:hidden"><div class="a" style="left:-20px;top:2px;width:76.7px;direction:rtl;text-align:center;font-size:11.3px;color:#606060">تیر</div></div>
<div class="a" style="left:143px;top:24px;width:1px;height:13px;background:#D0D0D0"></div>
<div class="a" style="left:180.0px;top:18px;width:36.7px;height:18px;overflow:hidden"><div class="a" style="left:-20px;top:2px;width:76.7px;direction:rtl;text-align:center;font-size:11.3px;color:#606060">مرداد</div></div>
<div class="a" style="left:180px;top:24px;width:1px;height:13px;background:#D0D0D0"></div>
<div class="a" style="left:216.7px;top:18px;width:36.7px;height:18px;overflow:hidden"><div class="a" style="left:-20px;top:2px;width:76.7px;direction:rtl;text-align:center;font-size:11.3px;color:#606060">شهریور</div></div>
<div class="a" style="left:216px;top:24px;width:1px;height:13px;background:#D0D0D0"></div>
<div class="a" style="left:253.4px;top:18px;width:35.5px;height:18px;overflow:hidden"><div class="a" style="left:-20px;top:2px;width:75.5px;direction:rtl;text-align:center;font-size:11.3px;color:#606060">مهر</div></div>
<div class="a" style="left:253px;top:6px;width:1px;height:31px;background:#D0D0D0"></div>
<div class="a" style="left:288.9px;top:18px;width:35.5px;height:18px;overflow:hidden"><div class="a" style="left:-20px;top:2px;width:75.5px;direction:rtl;text-align:center;font-size:11.3px;color:#606060">آبان</div></div>
<div class="a" style="left:288px;top:24px;width:1px;height:13px;background:#D0D0D0"></div>
<div class="a" style="left:324.4px;top:18px;width:35.5px;height:18px;overflow:hidden"><div class="a" style="left:-20px;top:2px;width:75.5px;direction:rtl;text-align:center;font-size:11.3px;color:#606060">آذر</div></div>
<div class="a" style="left:324px;top:24px;width:1px;height:13px;background:#D0D0D0"></div>
<div class="a" style="left:359.9px;top:18px;width:35.5px;height:18px;overflow:hidden"><div class="a" style="left:-20px;top:2px;width:75.5px;direction:rtl;text-align:center;font-size:11.3px;color:#606060">دی</div></div>
<div class="a" style="left:359px;top:24px;width:1px;height:13px;background:#D0D0D0"></div>
<div class="a" style="left:395.4px;top:18px;width:35.5px;height:18px;overflow:hidden"><div class="a" style="left:-20px;top:2px;width:75.5px;direction:rtl;text-align:center;font-size:11.3px;color:#606060">بهمن</div></div>
<div class="a" style="left:395px;top:24px;width:1px;height:13px;background:#D0D0D0"></div>
<div class="a" style="left:430.9px;top:18px;width:35.5px;height:18px;overflow:hidden"><div class="a" style="left:-20px;top:2px;width:75.5px;direction:rtl;text-align:center;font-size:11.3px;color:#606060">اسفند</div></div>
<div class="a" style="left:430px;top:24px;width:1px;height:13px;background:#D0D0D0"></div>
<div class="a" style="left:466.4px;top:18px;width:36.7px;height:18px;overflow:hidden"><div class="a" style="left:-20px;top:2px;width:76.7px;direction:rtl;text-align:center;font-size:11.3px;color:#606060">فروردین</div></div>
<div class="a" style="left:466px;top:6px;width:1px;height:31px;background:#D0D0D0"></div>
<div class="a" style="left:503.1px;top:18px;width:36.7px;height:18px;overflow:hidden"><div class="a" style="left:-20px;top:2px;width:76.7px;direction:rtl;text-align:center;font-size:11.3px;color:#606060">اردیبهشت</div></div>
<div class="a" style="left:503px;top:24px;width:1px;height:13px;background:#D0D0D0"></div>
<div class="a" style="left:539.8px;top:18px;width:36.7px;height:18px;overflow:hidden"><div class="a" style="left:-20px;top:2px;width:76.7px;direction:rtl;text-align:center;font-size:11.3px;color:#606060">خرداد</div></div>
<div class="a" style="left:539px;top:24px;width:1px;height:13px;background:#D0D0D0"></div>
<div class="a" style="left:576.5px;top:18px;width:36.7px;height:18px;overflow:hidden"><div class="a" style="left:-20px;top:2px;width:76.7px;direction:rtl;text-align:center;font-size:11.3px;color:#606060">تیر</div></div>
<div class="a" style="left:576px;top:24px;width:1px;height:13px;background:#D0D0D0"></div>
<div class="a" style="left:613.2px;top:18px;width:36.7px;height:18px;overflow:hidden"><div class="a" style="left:-20px;top:2px;width:76.7px;direction:rtl;text-align:center;font-size:11.3px;color:#606060">مرداد</div></div>
<div class="a" style="left:613px;top:24px;width:1px;height:13px;background:#D0D0D0"></div>
<div class="a" style="left:649.9px;top:18px;width:36.7px;height:18px;overflow:hidden"><div class="a" style="left:-20px;top:2px;width:76.7px;direction:rtl;text-align:center;font-size:11.3px;color:#606060">شهریور</div></div>
<div class="a" style="left:649px;top:24px;width:1px;height:13px;background:#D0D0D0"></div>
<div class="a" style="left:686.6px;top:18px;width:36.4px;height:18px;overflow:hidden"><div class="a" style="left:-20px;top:2px;width:76.4px;direction:rtl;text-align:center;font-size:11.3px;color:#606060">مهر</div></div>
<div class="a" style="left:686px;top:6px;width:1px;height:31px;background:#D0D0D0"></div>
<div class="a" style="left:39px;top:4px;font-size:12px;color:#595959">Half 1, 1399</div>
<div class="a" style="left:259px;top:4px;font-size:12px;color:#595959">Half 2, 1399</div>
<div class="a" style="left:472px;top:4px;font-size:12px;color:#595959">Half 1, 1400</div>
<div class="a" style="left:692px;top:4px;font-size:12px;color:#595959">Half 2, 1400</div>
</div>
<div class="a" style="left:635px;top:395px;width:713px;height:295px;background:#fff;"></div>
<div class="a" style="left:635px;top:517px;width:713px;height:1px;background:#808080;"></div>
<div class="a" style="left:635px;top:576px;width:713px;height:1px;background:#808080;"></div>
<div class="a" style="left:843px;top:400px;width:505px;height:2px;background:#B0B0B0;"></div>
<div class="a" style="left:841px;top:400px;width:3px;height:11px;background:#B0B0B0;"></div>
<div class="a" style="left:842px;top:395px;width:1px;height:295px;background:#9CBF9A;"></div>
<div class="a" style="left:841px;top:442px;width:32px;height:11px;background:#4A4A4A;"></div>
<div class="a" style="left:844px;top:444px;width:26px;height:3px;background:#fff;"></div>
<div class="a" style="left:844px;top:447px;width:26px;height:6px;background:#2E9EA5;"></div>
<div class="a" style="left:842px;top:464px;width:7px;height:11px;background:#8DB4E2;"></div>
<div class="a" style="left:849px;top:468px;width:2px;height:1px;background:#3F76B6;"></div>
<div class="a" style="left:852px;top:469px;width:1px;height:221px;background:#3F76B6;"></div>
<svg class="a" style="left:848px;top:517px;" width="9" height="6" viewBox="0 0 9 6"><path d="M0 0h9L4.5 6z" fill="#3F76B6"/></svg>
<div class="a" style="left:849px;top:523px;width:2px;height:10px;background:#8DB4E2;"></div>
<div class="a" style="left:852px;top:528px;width:3px;height:1px;background:#3F76B6;"></div>
<div class="a" style="left:854px;top:528px;width:1px;height:49px;background:#3F76B6;"></div>
<svg class="a" style="left:850px;top:576px;" width="9" height="6" viewBox="0 0 9 6"><path d="M0 0h9L4.5 6z" fill="#3F76B6"/></svg>
<div class="a" style="left:851px;top:581px;width:4px;height:11px;background:#8DB4E2;"></div>
<div class="a" style="left:855px;top:586px;width:4px;height:1px;background:#3F76B6;"></div>
<div class="a" style="left:858px;top:586px;width:1px;height:51px;background:#3F76B6;"></div>
<svg class="a" style="left:855px;top:636px;" width="9" height="6" viewBox="0 0 9 6"><path d="M0 0h9L4.5 6z" fill="#3F76B6"/></svg>
<div class="a" style="left:856px;top:643px;width:2px;height:9px;background:#8DB4E2;"></div>
<div class="a" style="left:855px;top:460px;font-size:13px;color:#111;font-weight:bold;">G.C. General Management</div>
<div class="a" style="left:857px;top:519px;font-size:13px;color:#111;font-weight:bold;">G.C. Project Management,G.C. General Management[25%]</div>
<div class="a" style="left:862px;top:578px;font-size:13px;color:#111;font-weight:bold;">G.C. Project Management[25%],G.C. Scheduler</div>
<div class="a" style="left:864px;top:637px;font-size:13px;color:#111;font-weight:bold;">G.C. General Management[10%],G.C. Project Management</div>
<div class="a" style="left:1348px;top:357px;width:17px;height:349px;background:#F0F0F0;"></div>
<div class="a" style="left:1349px;top:358px;width:15px;height:15px;background:#fff;border:1px solid #ABABAB"></div>
<svg class="a" style="left:1352px;top:363px;" width="9" height="5" viewBox="0 0 9 5"><path d="M0 5L4.5 0 9 5z" fill="#606060"/></svg>
<div class="a" style="left:1349px;top:373px;width:15px;height:18px;background:#fff;border:1px solid #ABABAB"></div>
<div class="a" style="left:1349px;top:673px;width:15px;height:15px;background:#fff;border:1px solid #ABABAB"></div>
<svg class="a" style="left:1352px;top:678px;" width="9" height="5" viewBox="0 0 9 5"><path d="M0 0L4.5 5 9 0z" fill="#606060"/></svg>
<div class="a" style="left:635px;top:690px;width:713px;height:16px;background:#F0F0F0;"></div>
<div class="a" style="left:637px;top:690px;width:16px;height:15px;background:#fff;border:1px solid #ABABAB"></div>
<svg class="a" style="left:642px;top:694px;" width="5" height="8" viewBox="0 0 5 8"><path d="M5 0v8L0 4z" fill="#606060"/></svg>
<div class="a" style="left:653px;top:690px;width:337px;height:15px;background:#fff;border:1px solid #ABABAB"></div>
<div class="a" style="left:1334px;top:690px;width:15px;height:15px;background:#fff;border:1px solid #ABABAB"></div>
<svg class="a" style="left:1340px;top:694px;" width="5" height="8" viewBox="0 0 5 8"><path d="M0 0v8l5-4z" fill="#606060"/></svg>
<div class="a" style="left:0px;top:706px;width:1365px;height:22px;background:#F0F0F0;border-top:1px solid #D0D0D0"></div>
<div class="a" style="left:7px;top:710px;font-size:12px;color:#444;">Edit</div>
<svg class="a" style="left:70px;top:709px;" width="16" height="14" viewBox="0 0 16 14"><rect x="0" y="0" width="11" height="5" fill="#666"/><path d="M6 8h8M11 4.5l3.5 3.5-3.5 3.5" stroke="#666" stroke-width="1.8" fill="none"/></svg>
<div class="a" style="left:89px;top:710px;font-size:11.6px;color:#444;">New Tasks : Auto Scheduled</div>
<div class="a" style="left:1046px;top:707px;width:38px;height:21px;background:#C8C8C8;"></div>
<svg class="a" style="left:1056px;top:710px;" width="15" height="13" viewBox="0 0 15 13"><rect x="0.5" y="0.5" width="14" height="12" fill="none" stroke="#777"/><path d="M3 4h5M5 7h5M7 10h5" stroke="#777"/></svg>
<svg class="a" style="left:1095px;top:710px;" width="15" height="13" viewBox="0 0 15 13"><rect x="0.5" y="0.5" width="14" height="12" fill="none" stroke="#777"/><rect x="0" y="0" width="15" height="3" fill="#777"/><path d="M0 6.5h15M0 9.5h15M4.5 3v10M8 3v10M11.5 3v10" stroke="#777"/></svg>
<svg class="a" style="left:1133px;top:710px;" width="15" height="13" viewBox="0 0 15 13"><rect x="0.5" y="0.5" width="14" height="12" fill="none" stroke="#777"/><rect x="0" y="0" width="9" height="6" fill="#777"/><rect x="9" y="6" width="6" height="3" fill="#777"/><path d="M0 9.5h15" stroke="#777"/></svg>
<svg class="a" style="left:1172px;top:710px;" width="14" height="13" viewBox="0 0 14 13"><rect x="0.5" y="0.5" width="13" height="12" fill="none" stroke="#777"/><path d="M0 4.5h14M0 8.5h14M4.5 0v13M9 0v13" stroke="#777"/></svg>
<svg class="a" style="left:1210px;top:709px;" width="14" height="15" viewBox="0 0 14 15"><rect x="3.5" y="0.5" width="10" height="14" fill="none" stroke="#777"/><path d="M0 3.5h6M0 11.5h6" stroke="#777"/></svg>
<div class="a" style="left:1241px;top:716px;width:7px;height:2px;background:#555;"></div>
<div class="a" style="left:1251px;top:717px;width:100px;height:1px;background:#B0B0B0;"></div>
<div class="a" style="left:1302px;top:713px;width:1px;height:8px;background:#B0B0B0;"></div>
<div class="a" style="left:1287px;top:711px;width:5px;height:12px;background:#666;"></div>
<div class="a" style="left:1354px;top:716px;width:8px;height:2px;background:#555;"></div>
<div class="a" style="left:1357px;top:713px;width:2px;height:8px;background:#555;"></div>
<div class="a" style="left:309px;top:557px;width:156px;height:166px;background:#fff;border:1px solid #C6C6C6;box-shadow:1px 1px 2px rgba(0,0,0,0.15)"></div>
<div class="a" style="left:314px;top:561px;width:147px;height:15px;background:#E9ECF0;"></div>
<svg class="a" style="left:317px;top:563px;" width="9" height="11" viewBox="0 0 9 11"><path d="M9 0v11L0 5.5z" fill="#3F76B6"/></svg>
<svg class="a" style="left:449px;top:563px;" width="9" height="11" viewBox="0 0 9 11"><path d="M0 0v11l9-5.5z" fill="#3F76B6"/></svg>
<div class="a" style="left:287px;width:200px;text-align:center;top:563px;font-size:11.2px;color:#444;">مرداد 1399</div>
<div class="a" style="left:318px;width:20px;text-align:center;top:581px;font-size:12px;color:#444">ی</div>
<div class="a" style="left:336px;width:20px;text-align:center;top:581px;font-size:12px;color:#444">د</div>
<div class="a" style="left:355px;width:20px;text-align:center;top:581px;font-size:12px;color:#444">س</div>
<div class="a" style="left:376px;width:20px;text-align:center;top:581px;font-size:12px;color:#444">چ</div>
<div class="a" style="left:395px;width:20px;text-align:center;top:581px;font-size:12px;color:#444">پ</div>
<div class="a" style="left:414px;width:20px;text-align:center;top:581px;font-size:12px;color:#444">ج</div>
<div class="a" style="left:434px;width:20px;text-align:center;top:581px;font-size:12px;color:#444">ش</div>
<div class="a" style="left:322px;top:596px;width:130px;height:1px;background:#D8D8D8;"></div>
<div class="a" style="left:322px;top:693px;width:130px;height:1px;background:#D8D8D8;"></div>
<div class="a" style="left:399px;top:661px;width:16px;height:13px;background:#E6E6E6;"></div>
<div class="a" style="left:416px;top:645px;width:18px;height:15px;border:1px solid #4E8A4C"></div>
<div class="a" style="left:319px;width:20px;text-align:right;top:602px;font-size:11.6px;color:#A0A0A0">29</div>
<div class="a" style="left:338px;width:20px;text-align:right;top:602px;font-size:11.6px;color:#A0A0A0">30</div>
<div class="a" style="left:356px;width:20px;text-align:right;top:602px;font-size:11.6px;color:#A0A0A0">31</div>
<div class="a" style="left:375px;width:20px;text-align:right;top:602px;font-size:11.6px;color:#222">1</div>
<div class="a" style="left:394px;width:20px;text-align:right;top:602px;font-size:11.6px;color:#222">2</div>
<div class="a" style="left:412px;width:20px;text-align:right;top:602px;font-size:11.6px;color:#222">3</div>
<div class="a" style="left:430px;width:20px;text-align:right;top:602px;font-size:11.6px;color:#222">4</div>
<div class="a" style="left:319px;width:20px;text-align:right;top:617px;font-size:11.6px;color:#222">5</div>
<div class="a" style="left:338px;width:20px;text-align:right;top:617px;font-size:11.6px;color:#222">6</div>
<div class="a" style="left:356px;width:20px;text-align:right;top:617px;font-size:11.6px;color:#222">7</div>
<div class="a" style="left:375px;width:20px;text-align:right;top:617px;font-size:11.6px;color:#222">8</div>
<div class="a" style="left:394px;width:20px;text-align:right;top:617px;font-size:11.6px;color:#222">9</div>
<div class="a" style="left:412px;width:20px;text-align:right;top:617px;font-size:11.6px;color:#222">10</div>
<div class="a" style="left:430px;width:20px;text-align:right;top:617px;font-size:11.6px;color:#222">11</div>
<div class="a" style="left:319px;width:20px;text-align:right;top:632px;font-size:11.6px;color:#222">12</div>
<div class="a" style="left:338px;width:20px;text-align:right;top:632px;font-size:11.6px;color:#222">13</div>
<div class="a" style="left:356px;width:20px;text-align:right;top:632px;font-size:11.6px;color:#222">14</div>
<div class="a" style="left:375px;width:20px;text-align:right;top:632px;font-size:11.6px;color:#222">15</div>
<div class="a" style="left:394px;width:20px;text-align:right;top:632px;font-size:11.6px;color:#222">16</div>
<div class="a" style="left:412px;width:20px;text-align:right;top:632px;font-size:11.6px;color:#222">17</div>
<div class="a" style="left:430px;width:20px;text-align:right;top:632px;font-size:11.6px;color:#222">18</div>
<div class="a" style="left:319px;width:20px;text-align:right;top:647px;font-size:11.6px;color:#222">19</div>
<div class="a" style="left:338px;width:20px;text-align:right;top:647px;font-size:11.6px;color:#222">20</div>
<div class="a" style="left:356px;width:20px;text-align:right;top:647px;font-size:11.6px;color:#222">21</div>
<div class="a" style="left:375px;width:20px;text-align:right;top:647px;font-size:11.6px;color:#222">22</div>
<div class="a" style="left:394px;width:20px;text-align:right;top:647px;font-size:11.6px;color:#222">23</div>
<div class="a" style="left:412px;width:20px;text-align:right;top:647px;font-size:11.6px;color:#222">24</div>
<div class="a" style="left:430px;width:20px;text-align:right;top:647px;font-size:11.6px;color:#222">25</div>
<div class="a" style="left:319px;width:20px;text-align:right;top:662px;font-size:11.6px;color:#222">26</div>
<div class="a" style="left:338px;width:20px;text-align:right;top:662px;font-size:11.6px;color:#222">27</div>
<div class="a" style="left:356px;width:20px;text-align:right;top:662px;font-size:11.6px;color:#222">28</div>
<div class="a" style="left:375px;width:20px;text-align:right;top:662px;font-size:11.6px;color:#222">29</div>
<div class="a" style="left:394px;width:20px;text-align:right;top:662px;font-size:11.6px;color:#222">30</div>
<div class="a" style="left:412px;width:20px;text-align:right;top:662px;font-size:11.6px;color:#222">31</div>
<div class="a" style="left:430px;width:20px;text-align:right;top:662px;font-size:11.6px;color:#A0A0A0">1</div>
<div class="a" style="left:319px;width:20px;text-align:right;top:677px;font-size:11.6px;color:#A0A0A0">2</div>
<div class="a" style="left:338px;width:20px;text-align:right;top:677px;font-size:11.6px;color:#A0A0A0">3</div>
<div class="a" style="left:356px;width:20px;text-align:right;top:677px;font-size:11.6px;color:#A0A0A0">4</div>
<div class="a" style="left:375px;width:20px;text-align:right;top:677px;font-size:11.6px;color:#A0A0A0">5</div>
<div class="a" style="left:394px;width:20px;text-align:right;top:677px;font-size:11.6px;color:#A0A0A0">6</div>
<div class="a" style="left:412px;width:20px;text-align:right;top:677px;font-size:11.6px;color:#A0A0A0">7</div>
<div class="a" style="left:430px;width:20px;text-align:right;top:677px;font-size:11.6px;color:#A0A0A0">8</div>
<div class="a" style="left:363px;top:698px;width:48px;height:21px;background:#E1E1E1;border:1px solid #ADADAD"></div>
<div class="a" style="left:363px;width:48px;text-align:center;top:703px;font-size:12px;color:#222"><u>T</u>oday</div>
</body></html>
